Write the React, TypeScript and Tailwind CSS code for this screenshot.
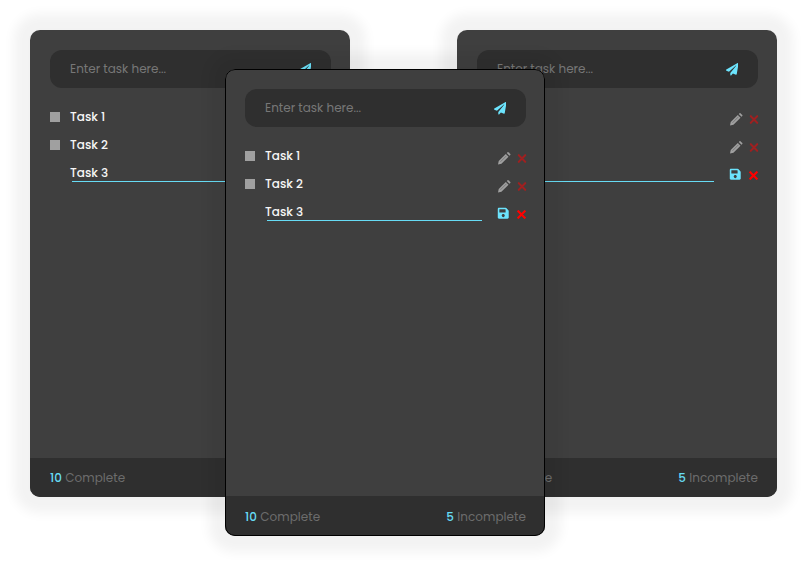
import { FaPaperPlane, FaSave } from "react-icons/fa";

function Pencil() {
  return (
    <svg viewBox="0 0 12 12" className="mt-[5px] size-[12.5px] shrink-0 text-[#a0a0a0]" fill="currentColor">
      <path d="M0 12 .7 8.7 7.5 1.9 10.1 4.5 3.3 11.3Z" />
      <path d="M8.4 1 9.2.2Q9.6-.1 10 .2L11.8 2Q12.1 2.4 11.8 2.8L11 3.6Z" />
      <path d="M2.4 9.4 8.3 3.5" stroke="#686868" strokeWidth=".7" fill="none" />
    </svg>
  );
}

function Cross({ className }: { className: string }) {
  return (
    <svg viewBox="0 0 9 9" className={`size-[9px] shrink-0 ${className}`} fill="none" stroke="currentColor" strokeWidth="2.1">
      <path d="M.6 .6 8.4 8.4M8.4 .6 .6 8.4" />
    </svg>
  );
}

function Task({ name }: { name: string }) {
  return (
    <li className="flex h-7 items-center">
      <span className="size-2.5 bg-[#a0a0a0]" />
      <span className="ml-2.5 w-[233px] text-[12px] font-medium text-[#f6f6f6]">{name}</span>
      <Pencil />
      <Cross className="mt-[5px] ml-[6.5px] translate-x-[0.5px] text-[#9f2020]" />
    </li>
  );
}

function EditedTask({ name }: { name: string }) {
  return (
    <li className="flex h-7 items-center">
      <span className="ml-[22px] flex h-[17px] w-[215px] items-center border-b border-[#67dcf5]">
        <span className="-ml-0.5 pt-px text-[12px] font-medium text-[#f6f6f6]">{name}</span>
      </span>
      <FaSave className="mt-0.5 ml-[15px] size-[12.5px] shrink-0 text-[#6ce4fd]" />
      <Cross className="mt-[5px] ml-[7px] text-[#ff0000]" />
    </li>
  );
}

function Card({ className, raised = false }: { className: string; raised?: boolean }) {
  return (
    <section
      className={`absolute flex h-[467px] w-80 flex-col overflow-hidden rounded-[10px] bg-[#3f3f3f] shadow-[0_0_12px_16px_rgba(0,0,0,0.05)] ${className}`}
    >
      <div className="mt-5 ml-5 flex h-[38px] w-[281px] shrink-0 items-center justify-between rounded-xl bg-[#2f2f2f] pr-5 pl-5">
        <span className="text-[12px] text-[#777777]">Enter task here...</span>
        <FaPaperPlane className="mt-px size-[12.5px] text-[#6ce4fd]" />
      </div>
      <ul className="mt-[15px] ml-5 grow">
        <Task name="Task 1" />
        <Task name="Task 2" />
        <EditedTask name="Task 3" />
      </ul>
      <footer
        className={`flex shrink-0 items-center justify-between bg-[#2f2f2f] pr-[19px] pl-5 text-[12px] tracking-[0.05px] text-[#6c6c6c] ${raised ? "h-10 pt-0.5" : "h-[39px] pt-px"}`}
      >
        <span><b className="font-medium text-[#67dcf5]">10</b> Complete</span>
        <span><b className="font-medium text-[#67dcf5]">5</b> Incomplete</span>
      </footer>
      {raised && <div className="pointer-events-none absolute inset-0 rounded-[10px] border border-black" />}
    </section>
  );
}

export default function App() {
  return (
    <main className="relative h-[566px] w-[807px] overflow-hidden bg-white font-['Poppins','Inter',sans-serif]">
      <Card className="top-[30px] left-[30px]" />
      <Card className="top-[30px] left-[457px]" />
      <Card className="top-[69px] left-[225px]" raised />
    </main>
  );
}
